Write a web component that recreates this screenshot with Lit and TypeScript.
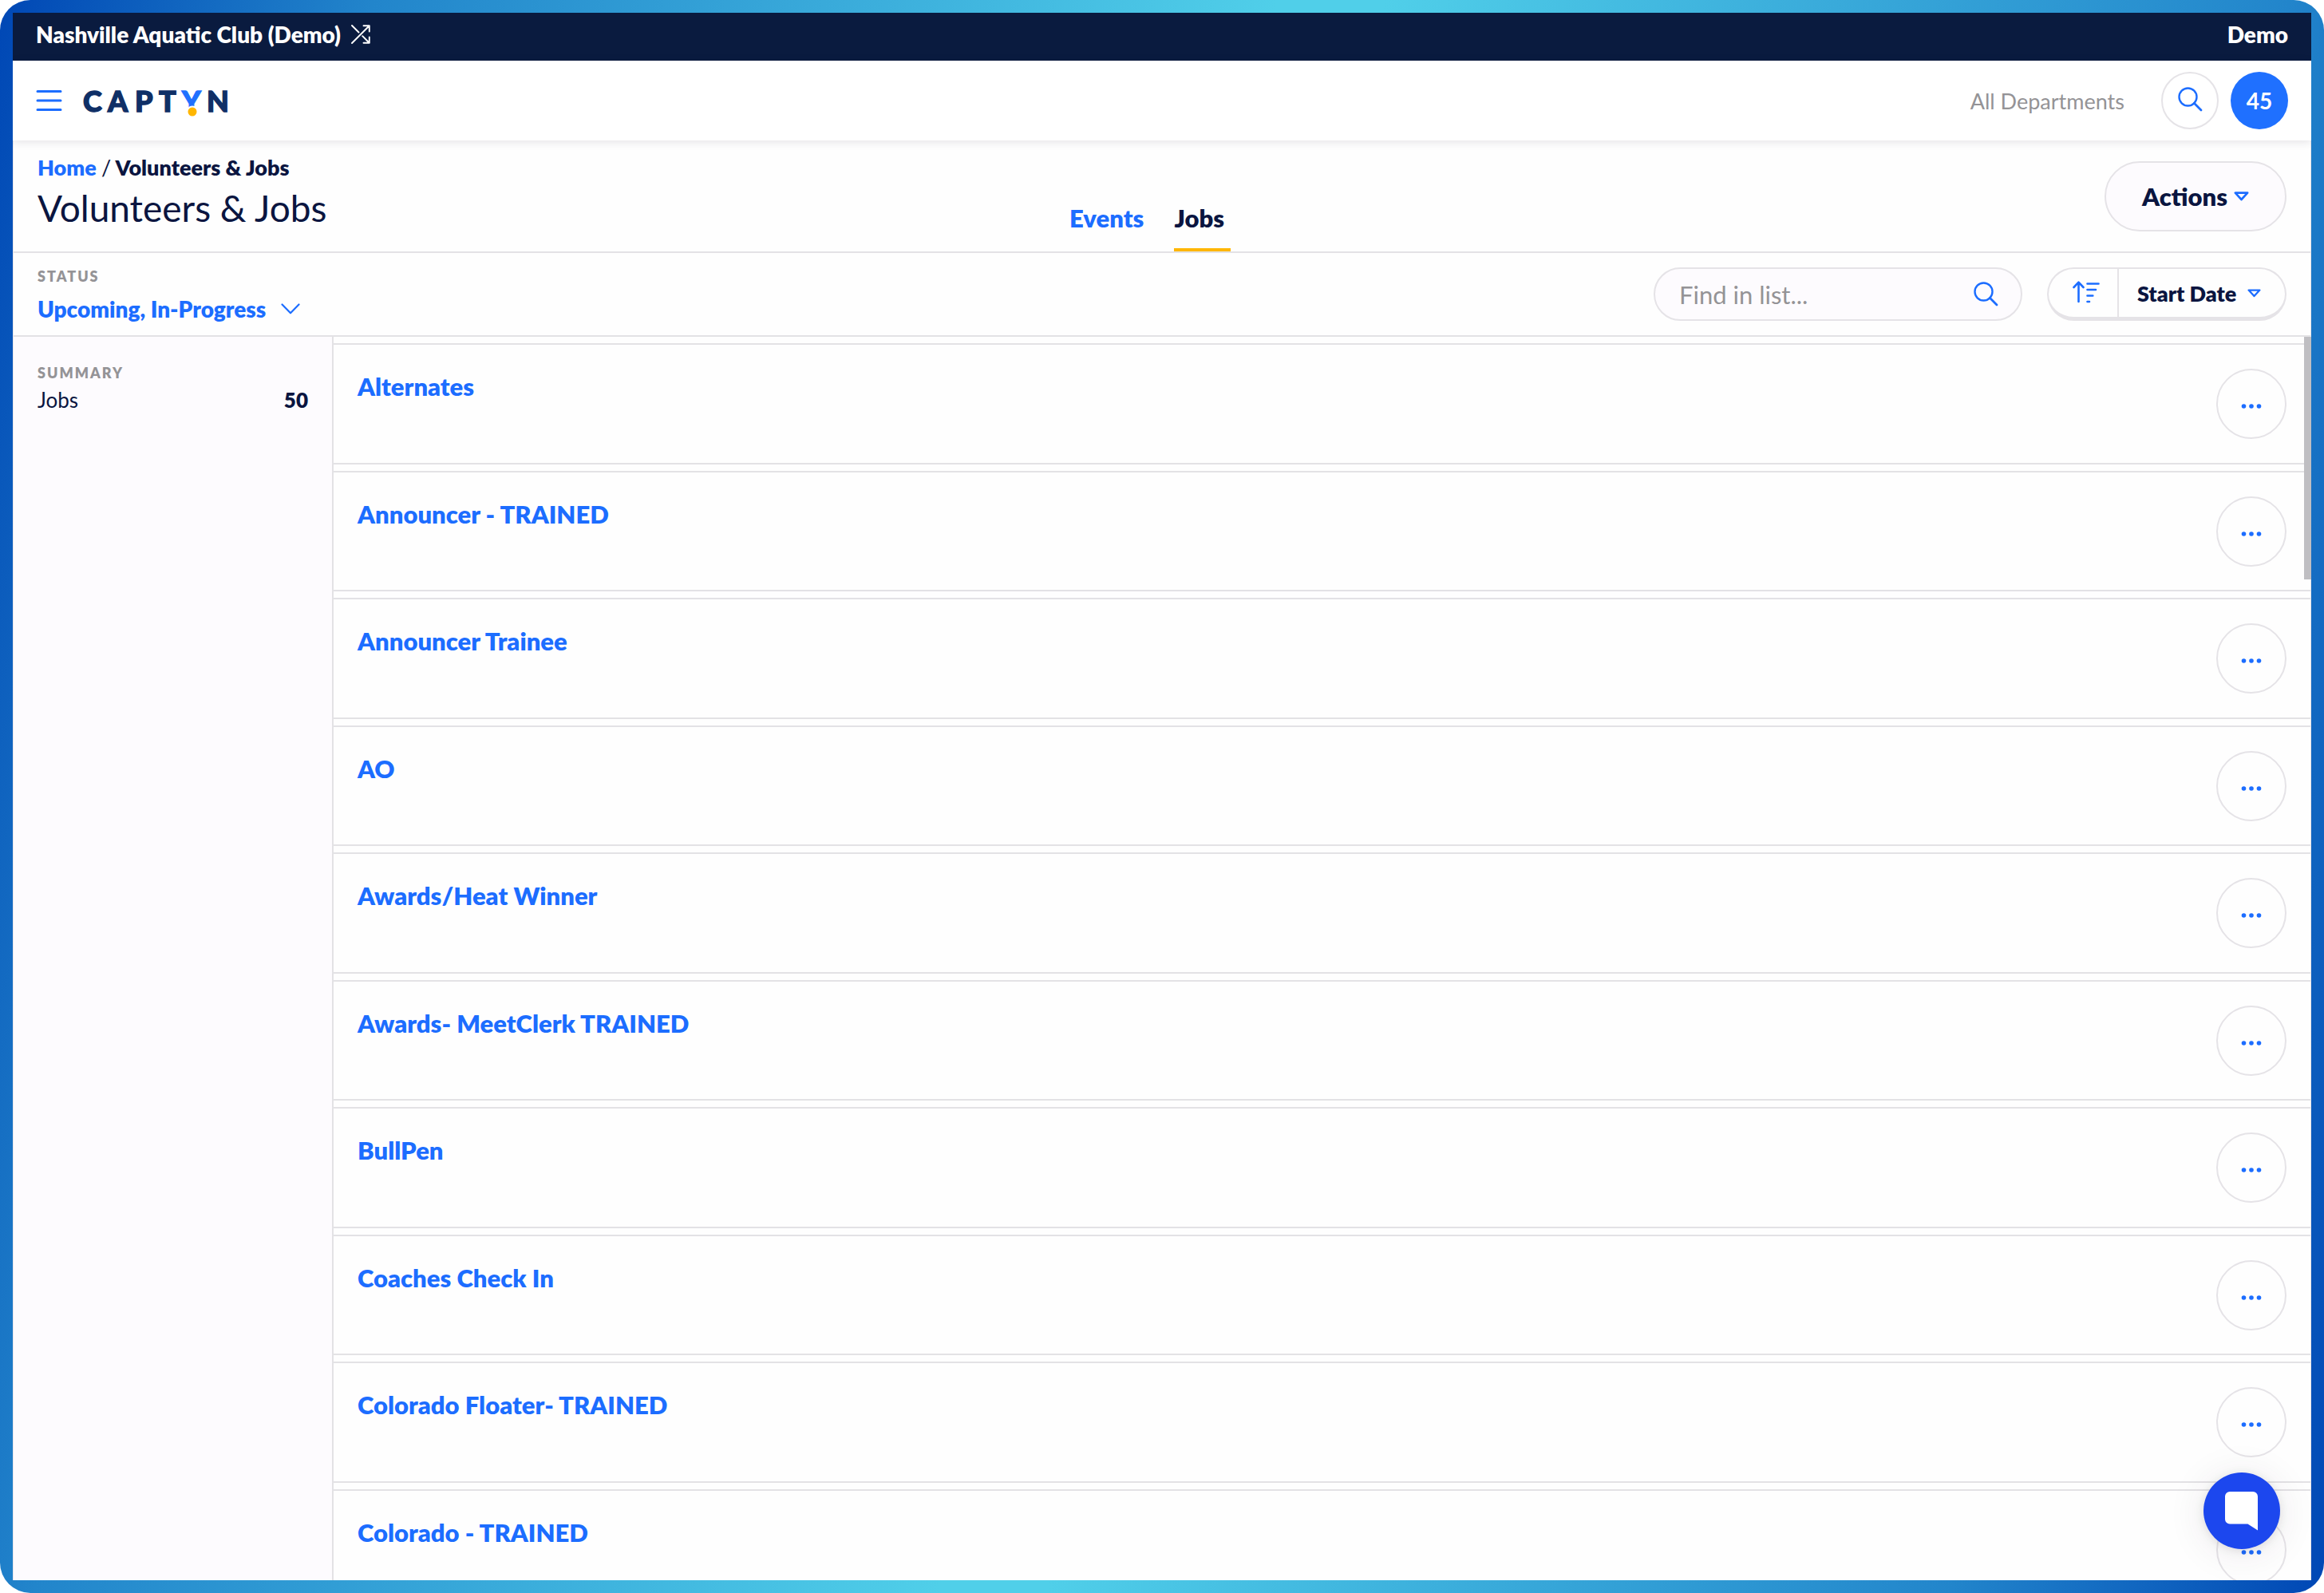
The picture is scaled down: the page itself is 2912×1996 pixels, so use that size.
import { LitElement, html, css, svg } from "lit";
import { customElement, property } from "lit/decorators.js";

const JOBS = [
  "Alternates",
  "Announcer - TRAINED",
  "Announcer Trainee",
  "AO",
  "Awards/Heat Winner",
  "Awards- MeetClerk TRAINED",
  "BullPen",
  "Coaches Check In",
  "Colorado Floater- TRAINED",
  "Colorado - TRAINED",
];

const searchShape = svg`
  <circle cx="12.5" cy="12.5" r="11" fill="none" stroke="currentColor" stroke-width="2.4" />
  <path d="M20.3 20.3 29 29" fill="none" stroke="currentColor" stroke-width="2.8" stroke-linecap="round" />`;

const searchIcon = html`<svg width="31" height="31" viewBox="0 0 31 31" aria-hidden="true">${searchShape}</svg>`;

const caretIcon = html`<svg width="19" height="12" viewBox="0 0 19 12" aria-hidden="true">
  <path d="M1.8 1.6H17.2L9.5 10Z" fill="none" stroke="currentColor" stroke-width="2.6" stroke-linejoin="round" />
</svg>`;

@customElement("job-row")
export class JobRow extends LitElement {
  @property() name = "";

  static styles = css`
    :host {
      display: flex;
      justify-content: space-between;
      align-items: flex-start;
      box-sizing: border-box;
      padding: 30px 30px 0 30px;
      border: solid #e3e2e5;
      border-width: 2px 0;
      background: #fefefe;
    }
    .name {
      font-size: 31px;
      line-height: 44px;
      font-weight: 800;
      color: #1c6dff;
      text-decoration: none;
    }
    .more {
      width: 88px;
      height: 88px;
      padding: 6px 0 0;
      border: 2px solid #e5e3e7;
      border-radius: 50%;
      background: none;
      color: #1c6dff;
      display: grid;
      place-items: center;
    }
  `;

  render() {
    return html`
      <a class="name" href="#job">${this.name}</a>
      <button class="more" aria-label="More options for ${this.name}">
        <svg width="26" height="6" viewBox="0 0 26 6" fill="currentColor" aria-hidden="true">
          <circle cx="3.5" cy="3" r="2.8" />
          <circle cx="13" cy="3" r="2.8" />
          <circle cx="22.5" cy="3" r="2.8" />
        </svg>
      </button>
    `;
  }
}

@customElement("app-root")
export class AppRoot extends LitElement {
  static styles = css`
    :host {
      display: block;
      font-family: Lato, "Open Sans", sans-serif;
      font-size: 28px;
      color: #0a1540;
    }
    * {
      box-sizing: border-box;
    }
    button,
    select,
    input {
      font: inherit;
      color: inherit;
      margin: 0;
      padding: 0;
      border: 0;
      background: none;
    }
    select {
      appearance: none;
    }
    a {
      color: #1c6dff;
      text-decoration: none;
    }
    svg {
      display: block;
      flex: none;
    }
    .frame {
      height: 100vh;
      padding: 16px;
      border-radius: 38px;
      background: linear-gradient(102deg, #0047b5 0%, #2285cb 14%, #50cfe9 48%, #50cfe9 52%, #2285cb 86%, #0047b5 100%);
    }
    .app {
      height: 100%;
      display: flex;
      flex-direction: column;
      overflow: hidden;
      background: #fefefe;
    }
    .topbar {
      flex: none;
      height: 60px;
      padding: 0 29px 6px;
      display: flex;
      align-items: center;
      justify-content: space-between;
      background: #0a1b3f;
      color: #fff;
      font-weight: 800;
    }
    .club {
      display: flex;
      align-items: center;
      gap: 13px;
    }
    .header {
      flex: none;
      height: 100px;
      padding: 0 29px;
      display: flex;
      align-items: center;
      background: #fff;
      box-shadow: 0 2px 10px rgba(40, 30, 60, 0.12);
      z-index: 1;
    }
    .menu {
      color: #1c6dff;
      margin-right: 23px;
    }
    .wordmark {
      font-family: Lato, sans-serif;
      font-size: 36px;
      line-height: 42px;
      font-weight: 900;
    }
    .departments {
      margin-left: auto;
      margin-right: 46px;
      font-size: 27px;
      color: #949396;
    }
    .round {
      width: 72px;
      height: 72px;
      border: 2px solid #e5e3e7;
      border-radius: 50%;
      display: grid;
      place-items: center;
      color: #1c6dff;
    }
    .round svg {
      margin-bottom: 4px;
    }
    .avatar {
      margin-left: 15px;
      border: 0;
      background: #1f70ff;
      color: #fff;
      font-weight: 700;
    }
    .body {
      flex: 1;
      min-height: 0;
      display: flex;
      flex-direction: column;
      border: solid #e8e6ea;
      border-width: 0 1px;
    }
    .titlebar {
      flex: none;
      display: grid;
      grid-template-columns: 1fr auto 1fr;
      height: 141px;
      padding: 0 30px;
      border-bottom: 2px solid #e3e2e5;
    }
    .heading {
      padding-top: 17px;
    }
    .crumbs {
      font-size: 27px;
      line-height: 34px;
      font-weight: 800;
    }
    .crumbs span {
      font-weight: 400;
    }
    h1 {
      margin: 6px 0 0;
      font-size: 46px;
      line-height: 56px;
      font-weight: 400;
    }
    .tabs {
      display: flex;
      align-items: flex-end;
    }
    .tab {
      margin-right: 30px;
      padding: 0 8px 18px 0;
      border-bottom: 4px solid transparent;
      font-size: 31px;
      line-height: 40px;
      font-weight: 800;
    }
    .tab.current {
      color: #0a1540;
      border-color: #ffb600;
    }
    .actions {
      justify-self: end;
      margin-top: 26px;
      height: 88px;
      padding: 0 45px;
      display: flex;
      align-items: center;
      gap: 8px;
      border: 2px solid #e5e3e7;
      border-radius: 44px;
      background: #fdfbfe;
      font-size: 31px;
      font-weight: 800;
    }
    .actions svg,
    .sortby svg,
    .find svg,
    .order svg,
    .picker svg {
      color: #1c6dff;
    }
    .filters {
      flex: none;
      height: 105px;
      padding: 0 30px;
      display: flex;
      align-items: flex-start;
      border-bottom: 2px solid #e3e2e5;
    }
    .status {
      margin-right: auto;
      padding-top: 17px;
    }
    .caption {
      display: block;
      margin: 0;
      font-size: 18px;
      line-height: 24px;
      font-weight: 800;
      letter-spacing: 2px;
      text-transform: uppercase;
      color: #949396;
    }
    .picker,
    .sortby {
      display: grid;
      align-items: center;
      font-weight: 800;
    }
    .picker {
      margin-top: 11px;
      color: #1c6dff;
    }
    .picker > *,
    .sortby > * {
      grid-area: 1 / 1;
    }
    .picker svg,
    .sortby svg {
      justify-self: end;
      pointer-events: none;
    }
    .picker select {
      height: 36px;
      padding-right: 42px;
    }
    .find {
      margin-top: 18px;
      width: 462px;
      height: 67px;
      padding: 0 28px 0 30px;
      display: flex;
      align-items: center;
      border: 2px solid #e5e3e7;
      border-radius: 34px;
      background: #fdfbfe;
    }
    .find input {
      flex: 1;
      min-width: 0;
      height: 40px;
      font-size: 31px;
      outline: 0;
    }
    .find input::placeholder {
      color: #949396;
      opacity: 1;
    }
    .sort {
      margin: 18px 0 0 31px;
      height: 67px;
      display: flex;
      border: 2px solid #e5e3e7;
      border-bottom-width: 5px;
      border-radius: 34px;
    }
    .order {
      width: 88px;
      padding: 0 0 2px 30px;
      border-right: 2px solid #e5e3e7;
    }
    .sortby {
      padding: 0 30px 0 23px;
      font-size: 27px;
    }
    .sortby select {
      height: 40px;
      padding-right: 30px;
    }
    .content {
      flex: 1;
      min-height: 0;
      display: flex;
      position: relative;
    }
    .summary {
      flex: none;
      width: 401px;
      padding: 33px 30px 0;
      border-right: 2px solid #e3e2e5;
      background: #fdfbfe;
    }
    .total {
      margin: 5px 0 0;
      display: flex;
      justify-content: space-between;
      font-size: 26px;
      line-height: 34px;
    }
    .total dt,
    .total dd {
      margin: 0;
    }
    .total dd {
      font-weight: 800;
    }
    .list {
      flex: 1;
      min-width: 0;
      overflow: hidden;
      padding-top: 8px;
      display: grid;
      grid-auto-rows: 152px 151px;
      row-gap: 8px;
    }
    .thumb {
      position: absolute;
      top: 0;
      right: -1px;
      width: 9px;
      height: 304px;
      background: #bfbec2;
    }
    .chat {
      position: fixed;
      right: 55px;
      bottom: 55px;
      width: 96px;
      height: 96px;
      border-radius: 50%;
      background: #1c47ee;
      box-shadow: 0 2px 12px rgba(0, 0, 0, 0.1), 0 4px 48px rgba(60, 20, 60, 0.1);
      z-index: 2;
    }
  `;

  render() {
    return html`
      <div class="frame">
        <div class="app">
          <div class="topbar">
            <div class="club">
              Nashville Aquatic Club (Demo)
              <svg width="24" height="24" viewBox="0 0 24 24" fill="none" stroke="#fff" stroke-width="1.9" stroke-linecap="round" stroke-linejoin="round" aria-hidden="true">
                <path d="M1 23 22.5 1.5M15.5 1.2h7.3v7.3M1 1l8.5 8.5M14.2 14.2l8.3 8.3M15.5 22.8h7.3v-7.3" />
              </svg>
            </div>
            <span>Demo</span>
          </div>

          <header class="header">
            <button class="menu" aria-label="Menu">
              <svg width="33" height="28" viewBox="0 0 33 28" stroke="currentColor" stroke-width="3" stroke-linecap="round" aria-hidden="true">
                <path d="M2 2.5h29M2 14h29M2 25.5h29" />
              </svg>
            </button>
            <svg class="wordmark" width="190" height="56" viewBox="0 0 190 56" stroke-width="1.4" role="img" aria-label="Captyn">
              <g fill="#0f2f66" stroke="#0f2f66">
                <text y="42" x="3">C</text>
                <text y="42" x="34">A</text>
                <text y="42" x="68">P</text>
                <text y="42" x="98">T</text>
                <text y="42" x="158">N</text>
              </g>
              <text y="42" x="127" fill="#1f70ff" stroke="#1f70ff">Y</text>
              <circle cx="140" cy="42" r="6.500" fill="#ffb600" stroke="#fff" stroke-width="2" />
            </svg>
            <button class="departments">All Departments</button>
            <button class="round" aria-label="Search">${searchIcon}</button>
            <button class="round avatar">45</button>
          </header>

          <div class="body">
            <section class="titlebar">
              <div class="heading">
                <nav class="crumbs"><a href="#home">Home</a> <span>/</span> Volunteers &amp; Jobs</nav>
                <h1>Volunteers &amp; Jobs</h1>
              </div>
              <nav class="tabs">
                <a class="tab" href="#events">Events</a>
                <a class="tab current" href="#jobs" aria-current="page">Jobs</a>
              </nav>
              <button class="actions">Actions ${caretIcon}</button>
            </section>

            <section class="filters">
              <div class="status">
                <label class="caption" for="status">Status</label>
                <div class="picker">
                  <select id="status">
                    <option>Upcoming, In-Progress</option>
                  </select>
                  <svg width="24" height="14" viewBox="0 0 24 14" fill="none" stroke="currentColor" stroke-width="2.2" stroke-linecap="round" stroke-linejoin="round" aria-hidden="true">
                    <path d="M1.5 1.5 12 12.3 22.500 1.500" />
                  </svg>
                </div>
              </div>
              <label class="find">
                <input type="text" placeholder="Find in list..." aria-label="Find in list" />
                ${searchIcon}
              </label>
              <div class="sort">
                <button class="order" aria-label="Sort ascending">
                  <svg width="34" height="28" viewBox="0 0 34 28" fill="none" stroke="currentColor" stroke-width="2.6" stroke-linecap="round" stroke-linejoin="round" aria-hidden="true">
                    <path d="M7.500 26V2M1.500 8l6-6.300 6 6.300M18.500 3.500h14M18.500 11h10.500M18.500 18.500h6.800M18.500 26h2.500" />
                  </svg>
                </button>
                <div class="sortby">
                  <select aria-label="Sort by">
                    <option>Start Date</option>
                  </select>
                  <svg width="17" height="11" viewBox="0 0 19 12" aria-hidden="true">
                    <path d="M1.8 1.6H17.2L9.5 10Z" fill="none" stroke="currentColor" stroke-width="2.6" stroke-linejoin="round" />
                  </svg>
                </div>
              </div>
            </section>

            <div class="content">
              <aside class="summary">
                <h2 class="caption">Summary</h2>
                <dl class="total">
                  <dt>Jobs</dt>
                  <dd>50</dd>
                </dl>
              </aside>
              <main class="list">${JOBS.map((name) => html`<job-row .name=${name}></job-row>`)}</main>
              <div class="thumb"></div>
            </div>
          </div>
        </div>
      </div>
      <button class="chat" aria-label="Open chat">
        <svg width="96" height="96" viewBox="0 0 96 96" aria-hidden="true">
          <path d="M33 24h29a6 6 0 0 1 6 6v42.500L55.500 64.500H33a6 6 0 0 1-6-6V30a6 6 0 0 1 6-6Z" fill="#fff" />
        </svg>
      </button>
    `;
  }
}
